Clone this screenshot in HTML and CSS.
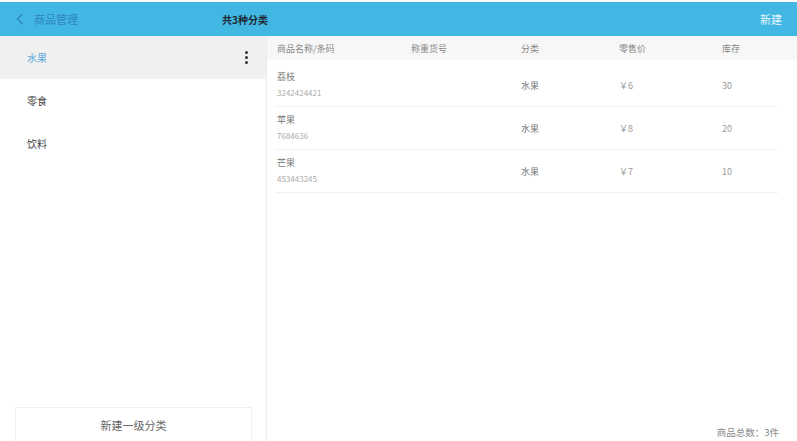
FILE: index.html
```html
<!DOCTYPE html>
<html lang="zh-CN">

<head>
  <meta charset="UTF-8" />
  <meta name="viewport" content="width=device-width, initial-scale=1.0" />
  <title>商品管理</title>
  <link rel="stylesheet" href="styles.css">
</head>

<body>
  <div class="page">
    <div class="topbar">
      <div class="topbar-left">
        <svg class="back" width="8" height="12" viewBox="0 0 8 12">
          <path d="M6.5 1 L1.5 6 L6.5 11" fill="none" stroke="#2f86bd" stroke-width="1.4" />
        </svg>
        <span class="title">商品管理</span>
      </div>
      <div class="topbar-center">共3种分类</div>
      <div class="topbar-right">新建</div>
    </div>

    <div class="main">
      <div class="sidebar">
        <ul class="category-list">
          <li class="active">
            <span>水果</span>
            <span class="more"><i></i><i></i><i></i></span>
          </li>
          <li><span>零食</span></li>
          <li><span>饮料</span></li>
        </ul>
        <div class="add-category">新建一级分类</div>
      </div>

      <div class="content">
        <div class="table-head">
          <span>商品名称/条码</span>
          <span>称重货号</span>
          <span>分类</span>
          <span>零售价</span>
          <span>库存</span>
        </div>
        <div class="table-body">
          <div class="row">
            <div class="name">
              <p>荔枝</p>
              <p class="code">3242424421</p>
            </div>
            <span></span>
            <span class="cat">水果</span>
            <span>￥6</span>
            <span>30</span>
          </div>
          <div class="row">
            <div class="name">
              <p>苹果</p>
              <p class="code">7684636</p>
            </div>
            <span></span>
            <span class="cat">水果</span>
            <span>￥8</span>
            <span>20</span>
          </div>
          <div class="row">
            <div class="name">
              <p>芒果</p>
              <p class="code">453443245</p>
            </div>
            <span></span>
            <span class="cat">水果</span>
            <span>￥7</span>
            <span>10</span>
          </div>
        </div>
        <div class="total">商品总数：3件</div>
      </div>
    </div>
  </div>
</body>

</html>
```

FILE: styles.css
```css
* {
  box-sizing: border-box;
}

body {
  margin: 0;
  font-family: "Noto Sans CJK SC", "Noto Sans", sans-serif;
  background: #fff;
}

.page {
  width: 797px;
  height: 441px;
  padding-top: 2px;
  display: flex;
  flex-direction: column;
  overflow: hidden;
}

.topbar {
  height: 34px;
  background: #42b7e4;
  display: flex;
  align-items: center;
  padding: 0 15px 0 16px;
}

.topbar-left {
  display: flex;
  align-items: center;
  width: 206px;
}

.topbar-left .back {
  margin-right: 10px;
}

.topbar-left .title {
  color: #2f86bd;
  font-size: 11px;
}

.topbar-center {
  flex: 1;
  font-size: 10px;
  font-weight: bold;
  color: #1d2a33;
}

.topbar-right {
  color: #e6f6fd;
  font-size: 11px;
}

.main {
  flex: 1;
  display: flex;
  min-height: 0;
}

.sidebar {
  width: 267px;
  border-right: 1px solid #ececec;
  display: flex;
  flex-direction: column;
}

.category-list {
  margin: 0;
  padding: 0;
  list-style: none;
  flex: 1;
}

.category-list li {
  height: 43px;
  padding: 0 18px 0 27px;
  display: flex;
  align-items: center;
  justify-content: space-between;
  font-size: 10px;
  color: #444;
}

.category-list li.active {
  background: #f0f0f0;
  color: #5aa7d8;
}

.category-list .more {
  display: flex;
  flex-direction: column;
  gap: 2px;
}

.category-list .more i {
  width: 3px;
  height: 3px;
  border-radius: 50%;
  background: #333;
}

.add-category {
  height: 34px;
  margin: 0 14px 0 15px;
  border: 1px solid #efefef;
  border-bottom: none;
  display: flex;
  align-items: center;
  justify-content: center;
  font-size: 11px;
  color: #666;
}

.content {
  flex: 1;
  display: flex;
  flex-direction: column;
}

.table-head,
.row {
  display: grid;
  grid-template-columns: 134px 110px 98px 103px 1fr;
  align-items: center;
}

.table-head {
  height: 24px;
  background: #f7f7f7;
  padding-left: 10px;
  font-size: 9px;
  color: #888;
}

.table-body {
  flex: 1;
  padding: 4px 19px 0 8px;
}

.row {
  height: 43px;
  padding-left: 2px;
  border-bottom: 1px solid #f1f1f1;
  font-size: 9px;
  color: #999;
}

.row .name p {
  margin: 0;
  font-size: 9px;
  color: #777;
  line-height: 16px;
}

.row .name .code {
  color: #aaa;
  font-size: 8px;
}

.row .cat {
  color: #777;
}

.total {
  text-align: right;
  padding: 0 18px 2px 0;
  font-size: 9.5px;
  color: #888;
}
```
